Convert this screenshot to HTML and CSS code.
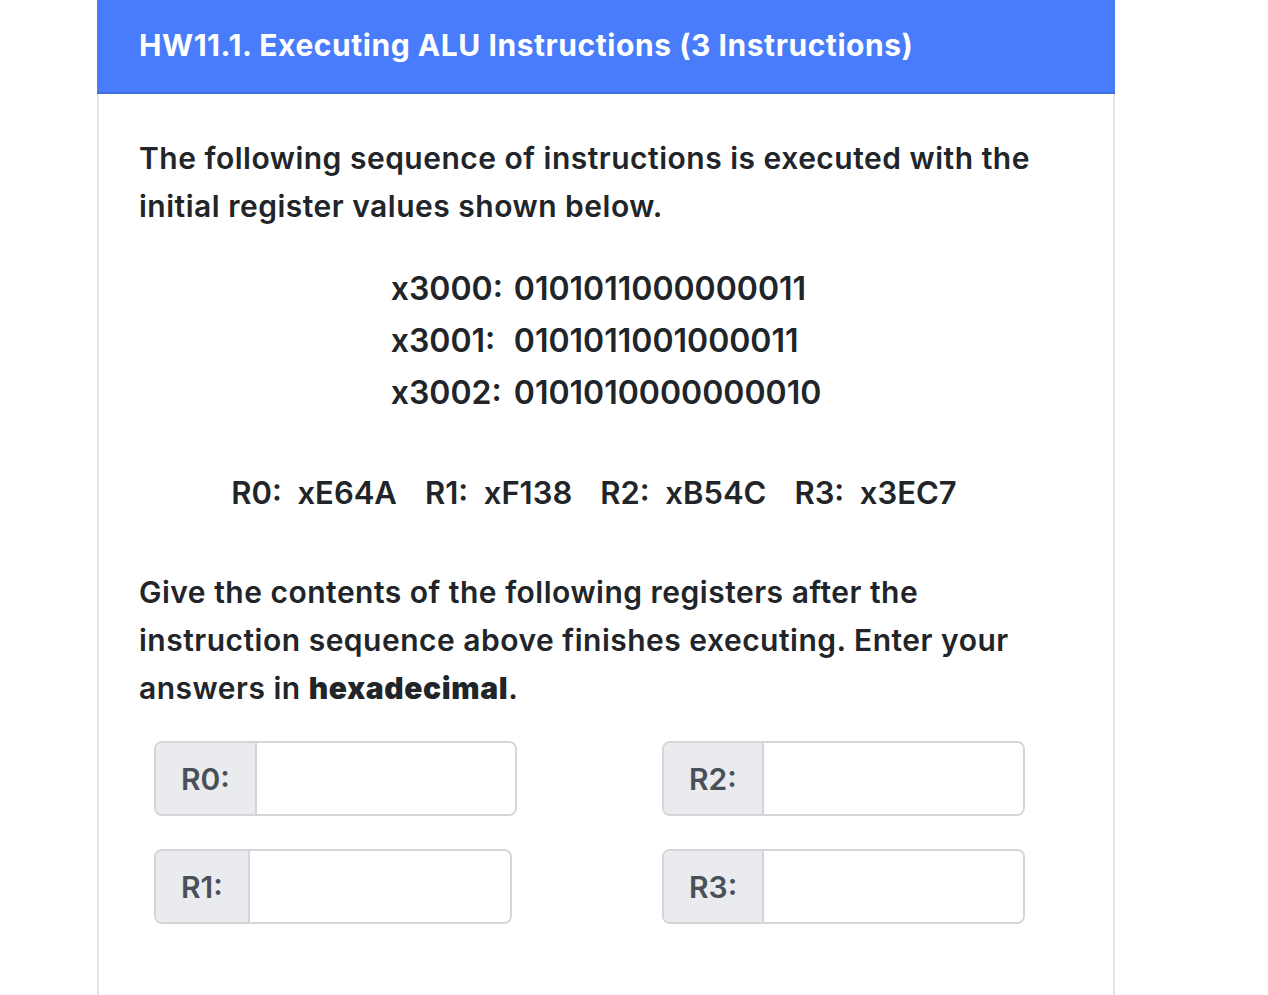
FILE: index.html
```html
<!DOCTYPE html>
<html lang="en">
<head>
<meta charset="utf-8">
<title>HW11.1</title>
<link rel="stylesheet" href="styles.css">
</head>
<body>
<div class="page">
  <div class="card">
    <div class="card-header">HW11.1. Executing ALU Instructions (3 Instructions)</div>
    <div class="card-body">
      <p class="lead">The following sequence of instructions is executed with the initial register values shown below.</p>
      <div class="code-wrap">
        <table class="code">
          <tr><td class="addr">x3000:</td><td>0101011000000011</td></tr>
          <tr><td class="addr">x3001:</td><td>0101011001000011</td></tr>
          <tr><td class="addr">x3002:</td><td>0101010000000010</td></tr>
        </table>
      </div>
      <div class="regs">
        <span>R0:&nbsp; xE64A</span>
        <span>R1:&nbsp; xF138</span>
        <span>R2:&nbsp; xB54C</span>
        <span>R3:&nbsp; x3EC7</span>
      </div>
      <p class="lead">Give the contents of the following registers after the instruction sequence above finishes executing. Enter your answers in <strong>hexadecimal</strong>.</p>
      <div class="answers">
        <div class="input-group w0"><span class="label">R0:</span><input type="text" class="field"></div>
        <div class="input-group w0"><span class="label">R2:</span><input type="text" class="field"></div>
        <div class="input-group w1"><span class="label">R1:</span><input type="text" class="field"></div>
        <div class="input-group w0"><span class="label">R3:</span><input type="text" class="field"></div>
      </div>
    </div>
  </div>
</div>
</body>
</html>
```
FILE: styles.css
```css
* { box-sizing: border-box; }
html, body { margin: 0; padding: 0; background: #fff; }
body {
  font-family: Inter, "Noto Sans", "Liberation Sans", sans-serif;
  color: #212529;
}
.page {
  padding-left: 97px;
  width: 1115px;
}
.card {
  border-left: 2px solid #e4e4e6;
  border-right: 2px solid #e4e4e6;
  min-height: 995px;
}
.card-header {
  background: #487cfa;
  color: #fff;
  font-weight: 700;
  font-size: 30px;
  height: 94px;
  line-height: 90px;
  border-bottom: 2px solid #3f6fdf;
  margin: 0 -2px 0 -2px;
  padding-left: 42px;
  letter-spacing: 0.55px;
}
.card-body {
  padding: 40px 40px 40px 40px;
}
.lead {
  margin: 0;
  font-size: 30px;
  line-height: 48px;
  font-weight: 600;
  letter-spacing: 0.5px;
}
.code-wrap {
  display: flex;
  justify-content: center;
  margin-top: 33px;
}
.code {
  border-collapse: collapse;
  font-size: 32px;
  font-weight: 600;
}
.code td {
  padding: 0;
  height: 52px;
  line-height: 52px;
}
.code td.addr { padding-right: 11px; }
.regs {
  display: flex;
  justify-content: center;
  gap: 28px;
  font-size: 31px;
  font-weight: 600;
  margin-top: 48px;
  margin-bottom: 49px;
  line-height: 52px;
  padding-right: 24px;
}
.answers {
  display: grid;
  grid-template-columns: 508px 508px;
  row-gap: 33px;
  margin-top: 29px;
  padding-left: 15px;
}
.input-group {
  display: flex;
  height: 75px;
  border: 2px solid #d3d5d8;
  border-radius: 8px;
  overflow: hidden;
}
.w0 { width: 363px; }
.w1 { width: 358px; }
.label {
  background: #e9ebee;
  color: #495057;
  font-size: 30px;
  font-weight: 600;
  display: flex;
  align-items: center;
  padding: 0 25px;
  border-right: 2px solid #d3d5d8;
}
.field {
  flex: 1;
  border: none;
  outline: none;
  min-width: 0;
  font-size: 30px;
  background: #fff;
}
strong { font-weight: 900; letter-spacing: 0.6px; }
```
